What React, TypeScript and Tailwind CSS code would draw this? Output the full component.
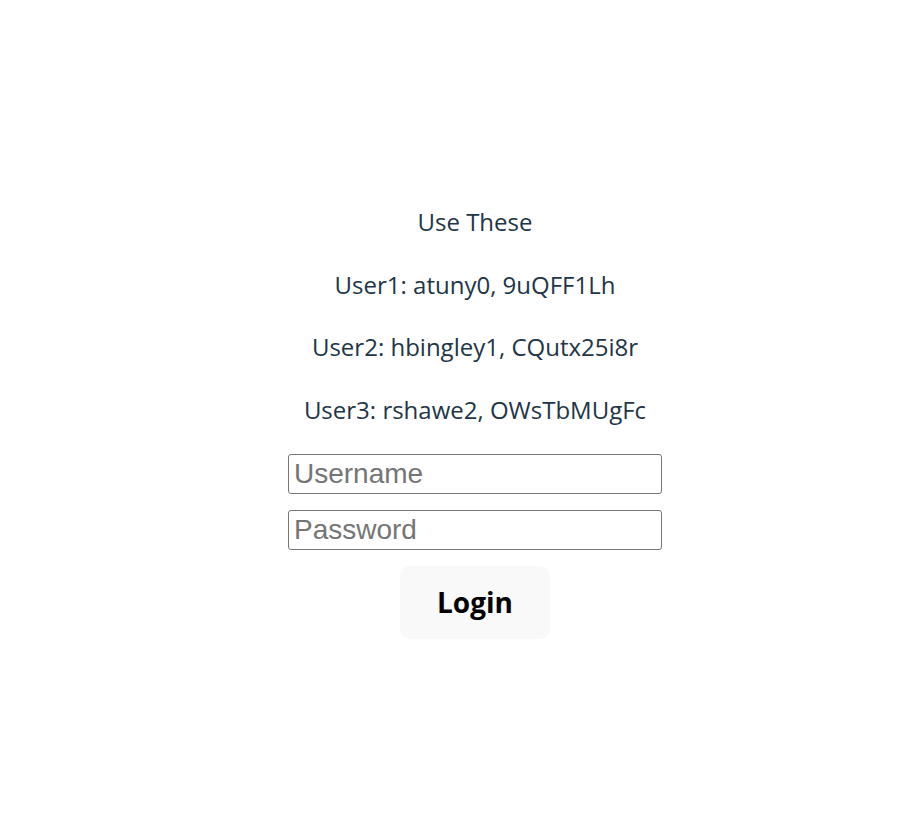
import { useState } from 'react';

const USERS = [
  { label: 'User1', name: 'atuny0', pass: '9uQFF1Lh' },
  { label: 'User2', name: 'hbingley1', pass: 'CQutx25i8r' },
  { label: 'User3', name: 'rshawe2', pass: 'OWsTbMUgFc' },
];

const App = () => {
  const [username, setUsername] = useState('');
  const [password, setPassword] = useState('');

  return (
    <div className="min-h-[827px] bg-white flex justify-center pl-[39px] pt-[205px] font-['Open_Sans',sans-serif]">
      <div className="flex flex-col items-center">
        <div className="flex flex-col items-center gap-[29.5px] text-[24px] leading-[33px] text-[#213547]">
          <p>Use These</p>
          {USERS.map(u => (
            <p key={u.label}>
              {u.label}: {u.name}, {u.pass}
            </p>
          ))}
        </div>

        <input
          value={username}
          onChange={e => setUsername(e.target.value)}
          placeholder="Username"
          className="mt-[28px] w-[374px] h-[40px] px-[5px] border border-[#767676] rounded-[3px] text-[28px] font-['Liberation_Sans',Arial,sans-serif] text-black placeholder:text-[#757575] outline-none"
        />
        <input
          type="password"
          value={password}
          onChange={e => setPassword(e.target.value)}
          placeholder="Password"
          className="mt-[16px] w-[374px] h-[40px] px-[5px] border border-[#767676] rounded-[3px] text-[28px] font-['Liberation_Sans',Arial,sans-serif] text-black placeholder:text-[#757575] outline-none"
        />

        <button className="mt-[16px] w-[150px] h-[73px] rounded-[10px] bg-[#f9f9f9] text-[28px] font-bold text-black">
          Login
        </button>
      </div>
    </div>
  );
};

export default App;
